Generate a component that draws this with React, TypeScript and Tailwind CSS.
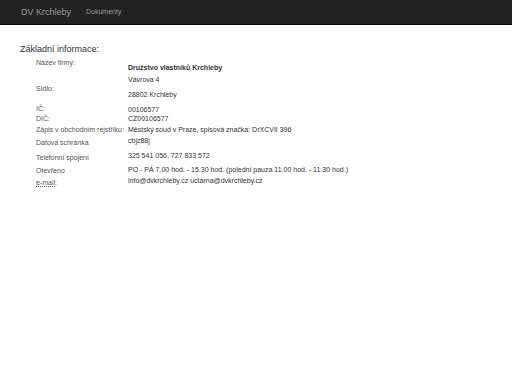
export default function App() {
  const label = "w-[92px] shrink-0 text-[#555]";
  const value = "text-[#333]";
  return (
    <div className="min-h-[384px] w-[512px] bg-white" style={{ fontFamily: '"Liberation Sans", Arial, sans-serif' }}>
      <div className="flex h-[25px] items-center border-b border-[#080808] bg-[#222222] pl-[21px]">
        <span className="text-[9px] leading-[10px] text-[#9d9d9d]">DV Krchleby</span>
        <span className="ml-[15px] text-[7px] leading-[10px] text-[#9d9d9d]">Dokumenty</span>
      </div>
      <div className="pl-[20px] pt-[18px]">
        <h4 className="text-[9px] leading-[12px] text-[#333]">Základní informace:</h4>
      </div>
      <div className="mt-[3px] pl-[36px] text-[7px] leading-[10px]">
        <div className="flex h-[26px]">
          <div className={label}>Název firmy:</div>
          <div className={value}>
            <div className="mt-[5px] font-bold">Družstvo vlastníků Krchleby</div>
            <div className="mt-[2px]">Vávrova 4</div>
          </div>
        </div>
        <div className="flex h-[20px]">
          <div className={label}>Sídlo:</div>
          <div className={value + " mt-[6px]"}>28802 Krchleby</div>
        </div>
        <div className="flex h-[10px]">
          <div className={label}>IČ:</div>
          <div className={value + " mt-[1px]"}>00106577</div>
        </div>
        <div className="flex h-[11px]">
          <div className={label}>DIČ:</div>
          <div className={value}>CZ00106577</div>
        </div>
        <div className="flex h-[11px]">
          <div className={label}>Zápis v obchodním rejstříku:</div>
          <div className={value}>Městský soud v Praze, spisová značka: DrXCVII 396</div>
        </div>
        <div className="flex h-[15px]">
          <div className={label + " mt-[2px]"}>Datová schránka</div>
          <div className={value}>cbjz88j</div>
        </div>
        <div className="flex h-[14px]">
          <div className={label + " mt-[2px]"}>Telefonní spojení</div>
          <div className={value}>325 541 056, 727 833 572</div>
        </div>
        <div className="flex h-[11px]">
          <div className={label + " mt-[1px]"}>Otevřeno</div>
          <div className={value}>PO - PÁ 7.00 hod. - 15.30 hod. (polední pauza 11.00 hod. - 11.30 hod.)</div>
        </div>
        <div className="flex h-[14px]">
          <div className={label + " mt-[2px]"}>
            <span className="underline decoration-dotted">e-mail</span>:
          </div>
          <div className={value}>info@dvkrchleby.cz uctarna@dvkrchleby.cz</div>
        </div>
      </div>
    </div>
  );
}
